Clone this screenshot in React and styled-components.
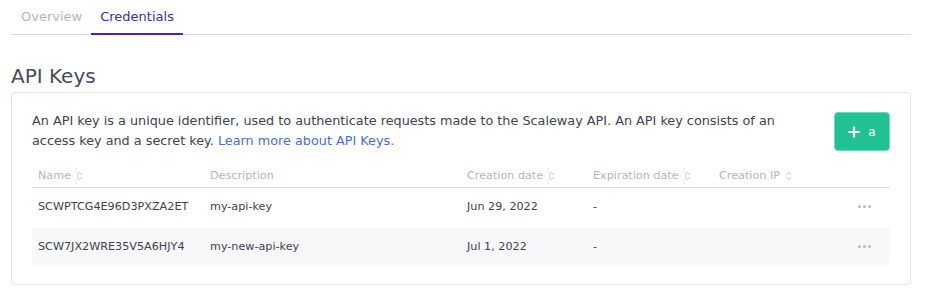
import React from 'react';
import styled, { createGlobalStyle } from 'styled-components';

const GlobalStyle = createGlobalStyle`
  body {
    margin: 0;
    background: #ffffff;
    font-family: 'DejaVu Sans', sans-serif;
    color: #3f4250;
  }
`;

const Page = styled.div`
  padding: 0 26px 0 11px;
`;

const Tabs = styled.div`
  display: flex;
  border-bottom: 1px solid #d9dae0;
  height: 34px;
`;

const Tab = styled.div`
  padding: 0 9px;
  font-size: 13px;
  line-height: 34px;
  color: ${p => (p.active ? '#4a2a8c' : '#b3b5bf')};
  border-bottom: 2px solid ${p => (p.active ? '#4f1fa8' : 'transparent')};
  margin-bottom: -1px;
  box-sizing: border-box;
  &:first-child {
    margin-left: 1px;
  }
`;

const Heading = styled.h2`
  margin: 29px 0 4px;
  font-size: 20px;
  font-weight: 400;
  color: #474a5a;
  line-height: 24px;
`;

const Card = styled.div`
  border: 1px solid #e3e4e8;
  border-radius: 4px;
  padding: 18px 20px 19px 20px;
`;

const Intro = styled.div`
  display: flex;
  justify-content: space-between;
  align-items: flex-start;
`;

const Text = styled.p`
  margin: 0;
  max-width: 770px;
  font-size: 12.8px;
  line-height: 20px;
  color: #3f4250;
`;

const Link = styled.a`
  color: #4a6fc8;
  text-decoration: none;
`;

const AddButton = styled.button`
  width: 56px;
  height: 39px;
  margin-top: 1px;
  background: #21c195;
  border: 1.5px solid #6adbb8;
  border-radius: 4px;
  color: #ffffff;
  display: flex;
  align-items: center;
  justify-content: center;
  gap: 8px;
  font-family: 'DejaVu Sans', sans-serif;
  font-size: 12px;
  padding: 0;
`;

const Table = styled.div`
  margin-top: 14px;
  font-size: 11.2px;
  display: flex;
  flex-direction: column;
  gap: 3px;
`;

const Row = styled.div`
  display: grid;
  grid-template-columns: 172px 257px 126px 126px 1fr 32px;
  align-items: center;
  padding-left: 6px;
  height: ${p => (p.header ? '22px' : '37px')};
  margin-bottom: ${p => (p.header ? '-3px' : '0')};
  background: ${p => (p.shaded ? '#f8f8fa' : 'transparent')};
  border-bottom: ${p => (p.header ? '1px solid #dcdde2' : 'none')};
  color: ${p => (p.header ? '#b4b6c0' : '#3f4250')};
  border-radius: ${p => (p.shaded ? '3px' : '0')};
`;

const HeadCell = styled.div`
  display: flex;
  align-items: center;
  gap: 5px;
  padding-bottom: 1px;
`;

const Cell = styled.div`
  white-space: nowrap;
`;

const Dots = styled.div`
  display: flex;
  gap: 2px;
  span {
    width: 3px;
    height: 3px;
    border-radius: 50%;
    background: #b9bbc4;
  }
`;

const SortIcon = () => (
  <svg width="7" height="10" viewBox="0 0 7 10" fill="none" stroke="#c4c6ce" strokeWidth="1">
    <path d="M1 4 L3.5 1.5 L6 4" />
    <path d="M1 6 L3.5 8.5 L6 6" />
  </svg>
);

const PlusIcon = () => (
  <svg width="12" height="12" viewBox="0 0 12 12" stroke="#ffffff" strokeWidth="2.2">
    <path d="M6 0.5 V11.5 M0.5 6 H11.5" />
  </svg>
);

const keys = [
  { name: 'SCWPTCG4E96D3PXZA2ET', description: 'my-api-key', created: 'Jun 29, 2022', expires: '-' },
  { name: 'SCW7JX2WRE35V5A6HJY4', description: 'my-new-api-key', created: 'Jul 1, 2022', expires: '-' },
];

const App = () => (
  <Page>
    <GlobalStyle />
    <Tabs>
      <Tab>Overview</Tab>
      <Tab active>Credentials</Tab>
    </Tabs>
    <Heading>API Keys</Heading>
    <Card>
      <Intro>
        <Text>
          An API key is a unique identifier, used to authenticate requests made to the Scaleway API. An API key consists of an
          access key and a secret key. <Link href="#">Learn more about API Keys.</Link>
        </Text>
        <AddButton>
          <PlusIcon />
          a
        </AddButton>
      </Intro>
      <Table>
        <Row header>
          <HeadCell>Name <SortIcon /></HeadCell>
          <HeadCell>Description</HeadCell>
          <HeadCell>Creation date <SortIcon /></HeadCell>
          <HeadCell>Expiration date <SortIcon /></HeadCell>
          <HeadCell>Creation IP <SortIcon /></HeadCell>
          <HeadCell />
        </Row>
        {keys.map((k, i) => (
          <Row key={k.name} shaded={i % 2 === 1}>
            <Cell>{k.name}</Cell>
            <Cell>{k.description}</Cell>
            <Cell>{k.created}</Cell>
            <Cell>{k.expires}</Cell>
            <Cell />
            <Dots><span /><span /><span /></Dots>
          </Row>
        ))}
      </Table>
    </Card>
  </Page>
);

export default App;
